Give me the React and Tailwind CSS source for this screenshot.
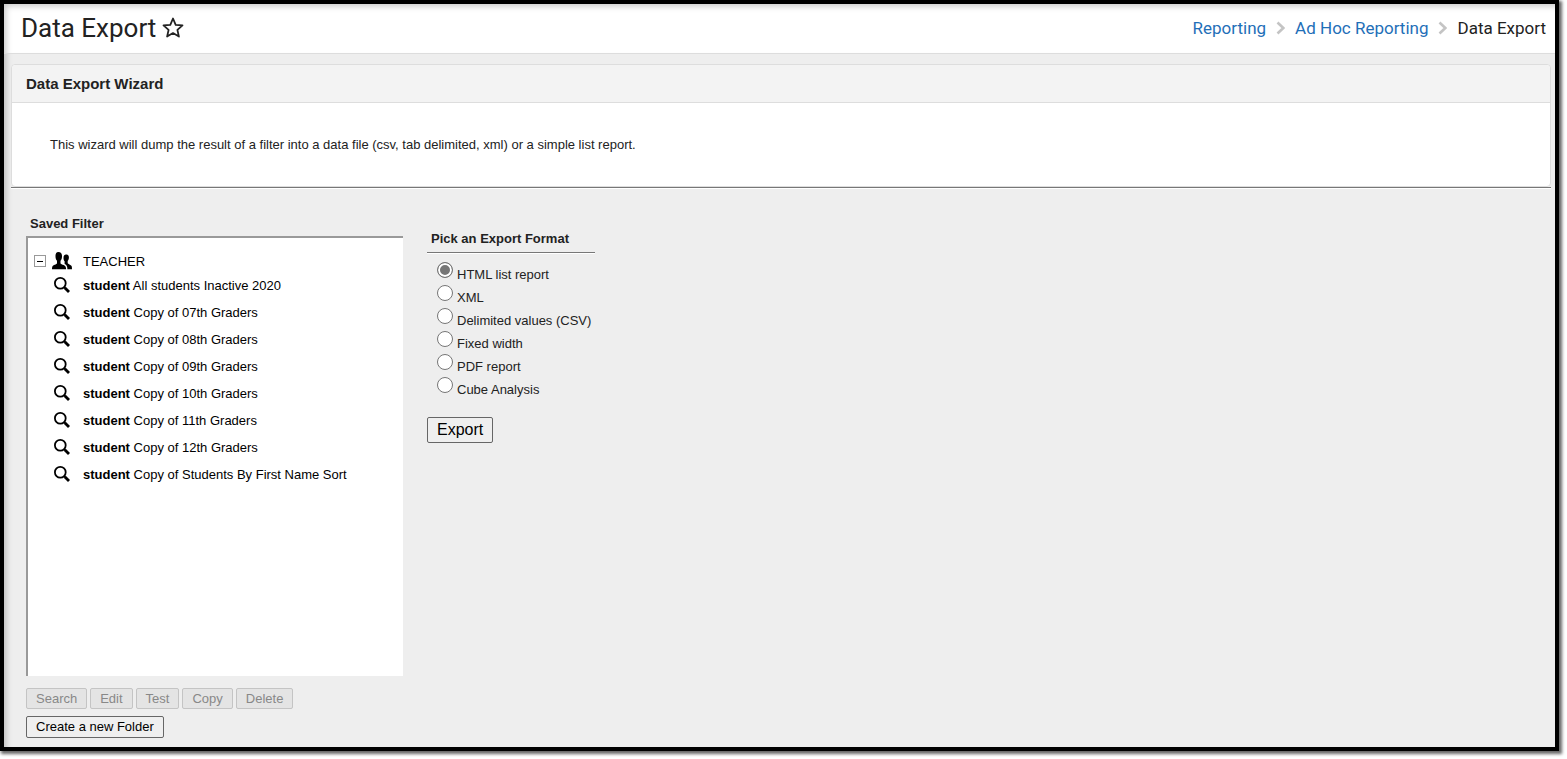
import { useState } from 'react';

const filters = [
  'All students Inactive 2020',
  'Copy of 07th Graders',
  'Copy of 08th Graders',
  'Copy of 09th Graders',
  'Copy of 10th Graders',
  'Copy of 11th Graders',
  'Copy of 12th Graders',
  'Copy of Students By First Name Sort',
];

const formats = ['HTML list report', 'XML', 'Delimited values (CSV)', 'Fixed width', 'PDF report', 'Cube Analysis'];

const actions = ['Search', 'Edit', 'Test', 'Copy', 'Delete'];

function StarIcon() {
  return (
    <svg className="size-[22px]" viewBox="0 0 22 22" fill="none" stroke="#222" strokeWidth="1.8" strokeLinejoin="round" aria-hidden="true">
      <path d="M11 1.500 13.700 7.800 20.500 8.400 15.400 12.900 16.900 19.600 11 16.100 5.100 19.600 6.600 12.900 1.500 8.400 8.300 7.800Z" />
    </svg>
  );
}

function Chevron() {
  return (
    <svg className="h-[14px] w-[9px]" viewBox="0 0 9 14" fill="none" stroke="#c4c4c4" strokeWidth="2.6" aria-hidden="true">
      <path d="M1.5 1.5 7.3 7 1.5 12.5" />
    </svg>
  );
}

function PeopleIcon() {
  return (
    <svg className="h-[18px] w-5 shrink-0" viewBox="0 0 20 18" fill="#000" aria-hidden="true">
      <path d="M13.800 2.500c1.800-.3 3.200.8 3.100 3.100 0 1.600-.5 2.600-1.200 3.400v2.200c.3.900 3.200 1.300 3.900 2.900.3.800.4 2.400.4 3.200h-4.600c0-2.800-.6-4.300-2.800-5.300V9.200c-.7-.8-1.100-1.800-1.100-3.300 0-1.900.8-3.200 2.300-3.400Z" />
      <path d="M6.300 0c2.600 0 3.800 1.700 3.700 4.500 0 1.800-.6 3.300-1.500 4.200v2.500c.3 1.200 4.200 1.600 5.100 3.500.4.800.5 1.800.5 2.600H0c0-.9 0-1.900.3-2.600.8-1.900 4.400-2.300 4.700-3.500V8.700c-.9-.9-1.500-2.400-1.500-4.200C3.400 1.700 4.300 0 6.300 0Z" />
    </svg>
  );
}

function SearchIcon() {
  return (
    <svg className="size-4 shrink-0" viewBox="0 0 16 16" fill="none" stroke="#000" aria-hidden="true">
      <circle cx="6.300" cy="6.300" r="5.400" strokeWidth="1.800" />
      <path d="m10 10 1.500 1.500" strokeWidth="2" />
      <path d="m11 11 4 4" strokeWidth="2.800" />
    </svg>
  );
}

export default function App() {
  const [format, setFormat] = useState(formats[0]);
  const [open, setOpen] = useState(true);

  return (
    <div className="flex min-h-screen bg-white pr-2 pb-2 font-['Liberation_Sans',Arial,sans-serif] text-[13px] leading-4 text-[#222]">
      <div className="flex grow flex-col border-4 border-black bg-[#eee] shadow-[2px_2px_3px_1px_rgba(0,0,0,0.6)]">
        <div className="grow shadow-[inset_4px_4px_6px_-2px_rgba(0,0,0,0.22)]">
          <header className="flex h-[50px] items-center justify-between border-b border-[#ddd] bg-white pr-[9px] pb-0.5 pl-[17px] font-[Roboto,sans-serif] shadow-[inset_4px_4px_6px_-2px_rgba(0,0,0,0.22)]">
            <div className="flex items-center gap-1.5">
              <h1 className="text-[26px] leading-8">Data Export</h1>
              <button type="button" aria-label="Add to favorites">
                <StarIcon />
              </button>
            </div>
            <nav aria-label="Breadcrumb" className="flex items-center gap-[10px] text-[17px] leading-6">
              <a href="#reporting" className="text-[#1f6fb8]">Reporting</a>
              <Chevron />
              <a href="#adhoc" className="text-[#1f6fb8]">Ad Hoc Reporting</a>
              <Chevron />
              <span>Data Export</span>
            </nav>
          </header>

          <section className="mx-1 mt-[10px] ml-[7px] border-b border-white">
            <div className="border-b border-[#777]">
              <div className="rounded border border-[#ddd] bg-white">
                <h2 className="rounded-t border-b border-[#ddd] bg-[#f3f3f3] px-[14px] py-2 text-[15px] leading-[21px] font-bold">
                  Data Export Wizard
                </h2>
                <p className="px-[38px] pt-[34px] pb-[33px]">
                  This wizard will dump the result of a filter into a data file (csv, tab delimited, xml) or a simple list report.
                </p>
              </div>
            </div>
          </section>

          <main className="flex items-start gap-6 px-[22px] pt-[27px] pb-[9px]">
            <div>
              <h3 className="mb-1 pl-1 font-bold">Saved Filter</h3>
              <div className="h-[440px] w-[377px] overflow-auto border-t-2 border-l-2 border-[#999] bg-white pt-[13px] pl-1.5 text-black">
                <div className="flex h-5 items-center">
                  <button
                    type="button"
                    aria-label="Toggle TEACHER folder"
                    aria-expanded={open}
                    onClick={() => setOpen(!open)}
                    className="flex size-3 items-center justify-center border border-[#999]"
                  >
                    <span className="h-px w-1.5 bg-black" />
                  </button>
                  <span className="mr-[11px] ml-1.5">
                    <PeopleIcon />
                  </span>
                  <span className="pt-0.5">TEACHER</span>
                </div>
                {open && (
                  <ul>
                    {filters.map((name) => (
                      <li key={name} className="flex h-[27px] items-center gap-[13px] pl-5">
                        <SearchIcon />
                        <span className="pt-0.5">
                          <b>student</b> {name}
                        </span>
                      </li>
                    ))}
                  </ul>
                )}
              </div>
              <div className="mt-3 flex gap-[3px]">
                {actions.map((name) => (
                  <button key={name} type="button" disabled className="h-[21px] rounded-xs border border-[#c4c4c4] bg-[#e4e4e4] px-[9px] text-[#888]">
                    {name}
                  </button>
                ))}
              </div>
              <button type="button" className="mt-[7px] h-[22px] rounded-xs border border-[#666] bg-[#efefef] px-[9px] text-black">
                Create a new Folder
              </button>
            </div>

            <fieldset className="min-w-[168px] pt-[15px]">
              <legend className="contents">
                <span className="block border-b border-[#777] px-1 pb-[5px] font-bold">Pick an Export Format</span>
              </legend>
              <div className="border-t border-white pt-2 pl-[10px]">
                {formats.map((name) => (
                  <label key={name} className="flex h-[23px] items-start gap-1">
                    <input
                      type="radio"
                      name="format"
                      checked={format === name}
                      onChange={() => setFormat(name)}
                      className="size-4 appearance-none rounded-full border border-[#767676] bg-white checked:bg-[#767676] checked:shadow-[inset_0_0_0_2px_white]"
                    />
                    <span className="pt-[5px]">{name}</span>
                  </label>
                ))}
              </div>
              <button type="button" className="mt-[17px] h-[26px] rounded-xs border border-[#666] bg-[#efefef] px-[9px] text-base leading-5 text-black">
                Export
              </button>
            </fieldset>
          </main>
        </div>
      </div>
    </div>
  );
}
